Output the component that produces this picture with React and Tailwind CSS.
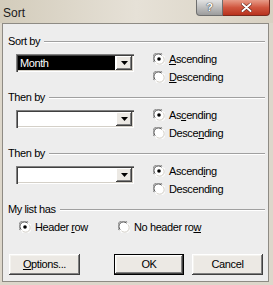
import React from "react";

const F = { fontFamily: '"Liberation Sans", Arial, sans-serif' };

function Radio({ checked }) {
  return (
    <svg width="12" height="12" viewBox="0 0 12 12" className="shrink-0">
      <circle cx="6" cy="6" r="5.5" fill="#ffffff" />
      <path d="M1.2 9.2 A5.5 5.5 0 0 1 9.2 1.2" stroke="#808080" strokeWidth="1" fill="none" />
      <path d="M2.2 8.6 A4.5 4.5 0 0 1 8.6 2.2" stroke="#404040" strokeWidth="1" fill="none" />
      <path d="M10.8 2.8 A5.5 5.5 0 0 1 2.8 10.8" stroke="#ffffff" strokeWidth="1" fill="none" />
      <path d="M9.8 3.4 A4.5 4.5 0 0 1 3.4 9.8" stroke="#d4d0c8" strokeWidth="1" fill="none" />
      {checked && <circle cx="6" cy="6" r="1.8" fill="#000000" />}
    </svg>
  );
}

function U({ children }) {
  return <span className="underline underline-offset-[1px]">{children}</span>;
}

function RadioRow({ checked, children }) {
  return (
    <div className="flex items-center h-[18px] gap-[4px]">
      <Radio checked={checked} />
      <span className="leading-none">{children}</span>
    </div>
  );
}

function Combo({ value }) {
  return (
    <div className="w-[118px] h-[18px] bg-white shadow-[inset_1px_1px_0_#808080,inset_2px_2px_0_#404040,inset_-1px_-1px_0_#ffffff,inset_-2px_-2px_0_#d4d0c8] p-[2px] flex">
      <div className="flex-1 flex items-center">
        {value ? (
          <div className="h-full w-full bg-black text-white flex items-center pl-[2px] mr-[1px] leading-none">
            {value}
          </div>
        ) : null}
      </div>
      <div className="w-[16px] h-full bg-[#ece9e4] shadow-[inset_-1px_-1px_0_#404040,inset_1px_1px_0_#ffffff,inset_-2px_-2px_0_#808080] flex items-center justify-center">
        <svg width="7" height="4" viewBox="0 0 7 4">
          <path d="M0 0 H7 L3.5 4 Z" fill="#000" />
        </svg>
      </div>
    </div>
  );
}

function GroupLabel({ children }) {
  return (
    <div className="flex items-center h-[13px] pl-[5px] pr-[3px]">
      <span className="leading-none">{children}</span>
      <div className="flex-1 ml-[4px] h-[2px] border-t border-[#a0a0a0] bg-white" />
    </div>
  );
}

function SortSection({ label, value, asc, desc }) {
  return (
    <div className="h-[56px]">
      <GroupLabel>{label}</GroupLabel>
      <div className="flex mt-[2px]">
        <div className="ml-[13px] mt-[4px]">
          <Combo value={value} />
        </div>
        <div className="ml-[19px] flex flex-col">
          <RadioRow checked>{asc}</RadioRow>
          <RadioRow>{desc}</RadioRow>
        </div>
      </div>
    </div>
  );
}

const btn =
  "h-[21px] flex items-center justify-center bg-[#ece9e4] shadow-[inset_-1px_-1px_0_#404040,inset_1px_1px_0_#ffffff,inset_-2px_-2px_0_#808080,inset_2px_2px_0_#f4f3ef]";

export default function App() {
  return (
    <div
      className="w-[273px] h-[285px] bg-[#ddd7cb] flex flex-col text-[11px] tracking-[-0.4px] text-black overflow-hidden"
      style={F}
    >
      <div className="h-[23px] flex items-start bg-gradient-to-r from-[#d3ccbb] via-[#e6e1d7] to-[#d8d1c2]">
        <span className="text-[12px] tracking-normal ml-[3px] mt-[4px] text-[#1a1a1a]">Sort</span>
        <div className="ml-auto mr-[3px] flex">
          <div className="w-[27px] h-[16px] rounded-bl-[4px] border border-t-0 border-[#6e6e6e] bg-gradient-to-b from-[#e2e2e2] to-[#9c9c9c] flex items-center justify-center">
            <span className="text-[11px] font-bold text-white leading-none [text-shadow:0_0_1px_#333,0_0_1px_#333]">?</span>
          </div>
          <div className="w-[47px] h-[16px] rounded-br-[4px] border border-t-0 border-l-0 border-[#7a2a1e] bg-gradient-to-b from-[#e79b88] via-[#d0563f] to-[#b8321d] flex items-center justify-center">
            <svg width="11" height="9" viewBox="0 0 11 9">
              <path d="M1.5 1 L9.5 8 M9.5 1 L1.5 8" stroke="#5a1a10" strokeWidth="3" strokeLinecap="round" />
              <path d="M1.5 1 L9.5 8 M9.5 1 L1.5 8" stroke="#ffffff" strokeWidth="2" strokeLinecap="round" />
            </svg>
          </div>
        </div>
      </div>
      <div className="ml-[2px] mr-[4px] h-[259px] border border-[#8e8b84] bg-[#ededed] pt-[11px]">
        <SortSection
          label="Sort by"
          value="Month"
          asc={<><U>A</U>scending</>}
          desc={<><U>D</U>escending</>}
        />
        <SortSection
          label="Then by"
          asc={<>As<U>c</U>ending</>}
          desc={<>Desce<U>n</U>ding</>}
        />
        <SortSection
          label="Then by"
          asc={<>Ascend<U>i</U>ng</>}
          desc={<>Descendin<U>g</U></>}
        />
        <GroupLabel>My list has</GroupLabel>
        <div className="flex mt-[2px] pl-[16px]">
          <div className="w-[99px]">
            <RadioRow checked>Header <U>r</U>ow</RadioRow>
          </div>
          <RadioRow>No header ro<U>w</U></RadioRow>
        </div>
        <div className="flex mt-[18px] pl-[6px]">
          <div className={`${btn} w-[71px]`}>
            <span><U>O</U>ptions...</span>
          </div>
          <div className={`${btn} w-[70px] ml-[34px] border border-black`}>
            <span>OK</span>
          </div>
          <div className={`${btn} w-[71px] ml-[8px]`}>
            <span>Cancel</span>
          </div>
        </div>
      </div>
    </div>
  );
}
